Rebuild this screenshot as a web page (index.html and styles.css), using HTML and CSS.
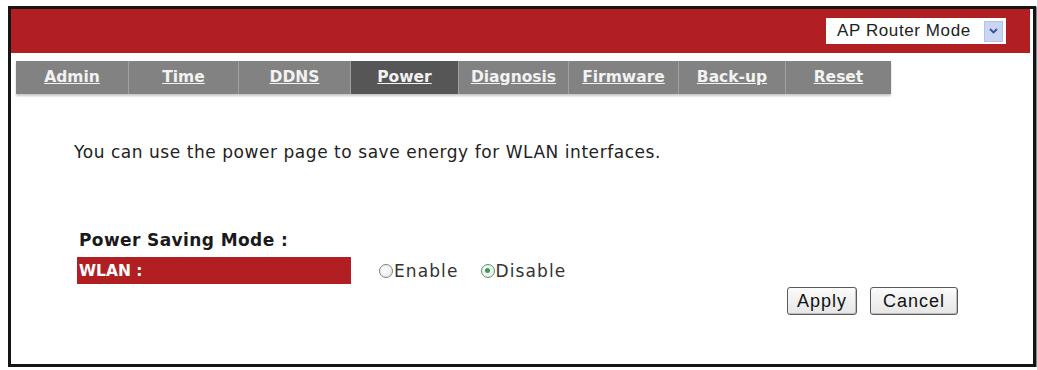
FILE: index.html
```html
<!DOCTYPE html>
<html>
<head>
<meta charset="utf-8">
<title>Power</title>
<link rel="stylesheet" href="styles.css">
</head>
<body>
<div class="frame">
  <div class="header">
    <div class="select">
      <span class="select-text">AP Router Mode</span>
      <span class="select-btn">
        <svg width="9" height="6" viewBox="0 0 9 6"><path d="M1 1 L4.5 4.5 L8 1" fill="none" stroke="#3b4f9a" stroke-width="1.8"/></svg>
      </span>
    </div>
  </div>
  <div class="tabs">
    <a class="tab">Admin</a>
    <a class="tab">Time</a>
    <a class="tab">DDNS</a>
    <a class="tab active">Power</a>
    <a class="tab">Diagnosis</a>
    <a class="tab">Firmware</a>
    <a class="tab">Back-up</a>
    <a class="tab last">Reset</a>
  </div>
  <div class="content">
    <p class="intro">You can use the power page to save energy for WLAN interfaces.</p>
    <div class="section-title">Power Saving Mode :</div>
    <div class="row">
      <div class="label">WLAN :</div>
      <div class="options">
        <span class="opt"><span class="radio"></span>Enable</span>
        <span class="opt"><span class="radio checked"></span>Disable</span>
      </div>
    </div>
    <div class="buttons">
      <button class="btn btn-apply">Apply</button>
      <button class="btn btn-cancel">Cancel</button>
    </div>
  </div>
</div>
</body>
</html>
```

FILE: styles.css
```css
html, body {
  margin: 0;
  padding: 0;
  background: #ffffff;
}

.frame {
  margin: 6px 0 0 8px;
  width: 1022px;
  height: 355px;
  border: 3px solid #151515;
  background: #ffffff;
  box-shadow: 1px 1px 1px #888;
}

.header {
  height: 44px;
  background: #b11f22;
  margin-right: 3px;
  display: flex;
  justify-content: flex-end;
  align-items: center;
  padding-right: 24px;
}

.select {
  width: 180px;
  height: 26px;
  background: #ffffff;
  display: flex;
  align-items: center;
  justify-content: space-between;
  box-sizing: border-box;
  padding: 0 3px 0 11px;
  font-family: "Liberation Sans", Arial, sans-serif;
  font-size: 17px;
  color: #222;
  letter-spacing: 0.6px;
}

.select-btn {
  width: 17px;
  height: 19px;
  background: #c9d6f2;
  border: 1px solid #b5c3e6;
  display: flex;
  align-items: center;
  justify-content: center;
}

.tabs {
  display: flex;
  margin: 8px 0 0 5px;
  width: 875px;
  height: 33px;
  background: #828282;
  box-shadow: 0 2px 2px #c8c8c8;
}

.tab {
  flex: 0 0 110px;
  display: flex;
  align-items: center;
  justify-content: center;
  font-family: "DejaVu Sans", Verdana, sans-serif;
  font-weight: bold;
  font-size: 15.5px;
  color: #f2f2f2;
  text-decoration: underline;
  border-right: 1px solid #a0a0a0;
  box-sizing: border-box;
  padding-bottom: 2px;
}

.tab:nth-child(1) { flex-basis: 113px; }
.tab:nth-child(3) { flex-basis: 112px; }
.tab:nth-child(4) { flex-basis: 108px; }
.tab:nth-child(7) { flex-basis: 107px; }
.tab:nth-child(8) { flex-basis: 105px; }

.tab.last {
  border-right: none;
}

.tab.active {
  background: #565656;
}

.content {
  padding: 0 0 0 63px;
}

.intro {
  margin: 48px 0 0 0;
  line-height: 20px;
  font-family: "DejaVu Sans", Verdana, sans-serif;
  font-size: 17px;
  color: #222;
  letter-spacing: 0.55px;
}

.section-title {
  margin: 68px 0 0 5px;
  line-height: 20px;
  font-family: "DejaVu Sans", Verdana, sans-serif;
  font-weight: bold;
  font-size: 17px;
  letter-spacing: 0.4px;
  color: #1a1a1a;
}

.row {
  display: flex;
  align-items: center;
  margin-top: 7px;
}

.label {
  width: 274px;
  height: 27px;
  margin-left: 3px;
  background: #b11f22;
  color: #fff;
  font-family: "DejaVu Sans", Verdana, sans-serif;
  font-weight: bold;
  font-size: 15.5px;
  display: flex;
  align-items: center;
  padding-left: 2px;
  box-sizing: border-box;
}

.options {
  display: flex;
  margin-left: 28px;
  gap: 22px;
  font-family: "DejaVu Sans", Verdana, sans-serif;
  font-size: 17px;
  letter-spacing: 1.1px;
  color: #333;
}

.opt {
  display: flex;
  align-items: center;
}

.radio {
  width: 12px;
  height: 12px;
  border: 1px solid #808080;
  border-radius: 50%;
  background: radial-gradient(circle at 40% 40%, #ffffff, #e4e4e4);
  margin-right: 1px;
  position: relative;
}

.radio.checked {
  border-color: #4f9a64;
}

.radio.checked::after {
  content: "";
  position: absolute;
  left: 3.5px;
  top: 3.5px;
  width: 5px;
  height: 5px;
  border-radius: 50%;
  background: #3c9a52;
}

.buttons {
  display: flex;
  justify-content: flex-end;
  gap: 13px;
  margin: 3px 75px 0 0;
}

.btn {
  height: 28px;
  padding: 0;
  font-family: "Liberation Sans", Arial, sans-serif;
  font-size: 18px;
  letter-spacing: 1px;
  color: #111;
  background: linear-gradient(#fbfbfb, #e6e6e6);
  border: 1px solid #5a5a5a;
  border-radius: 3px;
  box-shadow: inset -1px -1px 0 #bdbdbd;
}

.btn-apply {
  width: 70px;
}

.btn-cancel {
  width: 88px;
}
```
